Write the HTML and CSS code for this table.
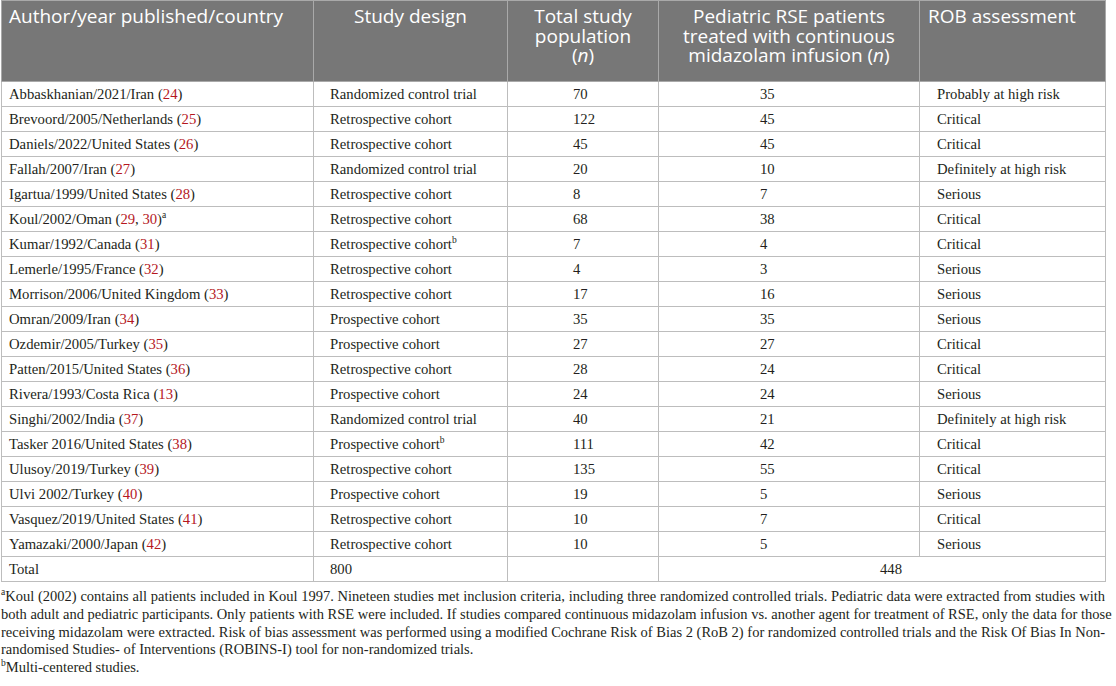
FILE: index.html
```html
<!DOCTYPE html>
<html>
<head>
<meta charset="utf-8">
<link rel="stylesheet" href="styles.css">
</head>
<body>
<div class="page">
<table class="tbl">
  <colgroup>
    <col class="c1"><col class="c2"><col class="c3"><col class="c4"><col class="c5">
  </colgroup>
  <thead>
    <tr>
      <th class="h-left">Author/year published/country</th>
      <th>Study design</th>
      <th><span class="hl">Total study</span><span class="hl">population</span><span class="hl">(<i>n</i>)</span></th>
      <th><span class="hl">Pediatric RSE patients</span><span class="hl">treated with continuous</span><span class="hl">midazolam infusion (<i>n</i>)</span></th>
      <th class="h-left h-rob">ROB assessment</th>
    </tr>
  </thead>
  <tbody>
    <tr><td class="a">Abbaskhanian/2021/Iran (<span class="ref">24</span>)</td><td class="d">Randomized control trial</td><td class="n1">70</td><td class="n2">35</td><td class="r">Probably at high risk</td></tr>
    <tr><td class="a">Brevoord/2005/Netherlands (<span class="ref">25</span>)</td><td class="d">Retrospective cohort</td><td class="n1">122</td><td class="n2">45</td><td class="r">Critical</td></tr>
    <tr><td class="a">Daniels/2022/United States (<span class="ref">26</span>)</td><td class="d">Retrospective cohort</td><td class="n1">45</td><td class="n2">45</td><td class="r">Critical</td></tr>
    <tr><td class="a">Fallah/2007/Iran (<span class="ref">27</span>)</td><td class="d">Randomized control trial</td><td class="n1">20</td><td class="n2">10</td><td class="r">Definitely at high risk</td></tr>
    <tr><td class="a">Igartua/1999/United States (<span class="ref">28</span>)</td><td class="d">Retrospective cohort</td><td class="n1">8</td><td class="n2">7</td><td class="r">Serious</td></tr>
    <tr><td class="a">Koul/2002/Oman (<span class="ref">29</span>, <span class="ref">30</span>)<sup>a</sup></td><td class="d">Retrospective cohort</td><td class="n1">68</td><td class="n2">38</td><td class="r">Critical</td></tr>
    <tr><td class="a">Kumar/1992/Canada (<span class="ref">31</span>)</td><td class="d">Retrospective cohort<sup>b</sup></td><td class="n1">7</td><td class="n2">4</td><td class="r">Critical</td></tr>
    <tr><td class="a">Lemerle/1995/France (<span class="ref">32</span>)</td><td class="d">Retrospective cohort</td><td class="n1">4</td><td class="n2">3</td><td class="r">Serious</td></tr>
    <tr><td class="a">Morrison/2006/United Kingdom (<span class="ref">33</span>)</td><td class="d">Retrospective cohort</td><td class="n1">17</td><td class="n2">16</td><td class="r">Serious</td></tr>
    <tr><td class="a">Omran/2009/Iran (<span class="ref">34</span>)</td><td class="d">Prospective cohort</td><td class="n1">35</td><td class="n2">35</td><td class="r">Serious</td></tr>
    <tr><td class="a">Ozdemir/2005/Turkey (<span class="ref">35</span>)</td><td class="d">Prospective cohort</td><td class="n1">27</td><td class="n2">27</td><td class="r">Critical</td></tr>
    <tr><td class="a">Patten/2015/United States (<span class="ref">36</span>)</td><td class="d">Retrospective cohort</td><td class="n1">28</td><td class="n2">24</td><td class="r">Critical</td></tr>
    <tr><td class="a">Rivera/1993/Costa Rica (<span class="ref">13</span>)</td><td class="d">Prospective cohort</td><td class="n1">24</td><td class="n2">24</td><td class="r">Serious</td></tr>
    <tr><td class="a">Singhi/2002/India (<span class="ref">37</span>)</td><td class="d">Randomized control trial</td><td class="n1">40</td><td class="n2">21</td><td class="r">Definitely at high risk</td></tr>
    <tr><td class="a">Tasker 2016/United States (<span class="ref">38</span>)</td><td class="d">Prospective cohort<sup>b</sup></td><td class="n1">111</td><td class="n2">42</td><td class="r">Critical</td></tr>
    <tr><td class="a">Ulusoy/2019/Turkey (<span class="ref">39</span>)</td><td class="d">Retrospective cohort</td><td class="n1">135</td><td class="n2">55</td><td class="r">Critical</td></tr>
    <tr><td class="a">Ulvi 2002/Turkey (<span class="ref">40</span>)</td><td class="d">Prospective cohort</td><td class="n1">19</td><td class="n2">5</td><td class="r">Serious</td></tr>
    <tr><td class="a">Vasquez/2019/United States (<span class="ref">41</span>)</td><td class="d">Retrospective cohort</td><td class="n1">10</td><td class="n2">7</td><td class="r">Critical</td></tr>
    <tr><td class="a">Yamazaki/2000/Japan (<span class="ref">42</span>)</td><td class="d">Retrospective cohort</td><td class="n1">10</td><td class="n2">5</td><td class="r">Serious</td></tr>
    <tr><td class="a">Total</td><td class="d">800</td><td class="n1"></td><td class="tot" colspan="2">448</td></tr>
  </tbody>
</table>
<div class="notes">
  <span class="jl"><sup>a</sup>Koul (2002) contains all patients included in Koul 1997. Nineteen studies met inclusion criteria, including three randomized controlled trials. Pediatric data were extracted from studies with</span>
  <span class="jl">both adult and pediatric participants. Only patients with RSE were included. If studies compared continuous midazolam infusion vs. another agent for treatment of RSE, only the data for those</span>
  <span class="jl">receiving midazolam were extracted. Risk of bias assessment was performed using a modified Cochrane Risk of Bias 2 (RoB 2) for randomized controlled trials and the Risk Of Bias In Non-</span>
  <span class="ll">randomised Studies- of Interventions (ROBINS-I) tool for non-randomized trials.</span>
  <span class="ll"><sup>b</sup>Multi-centered studies.</span>
</div>
</div>
</body>
</html>
```

FILE: styles.css
```css
html, body {
  margin: 0;
  padding: 0;
  background: #ffffff;
}

.page {
  padding-left: 1px;
  width: 1104px;
  font-family: "Liberation Serif", "Times New Roman", serif;
  color: #231f20;
}

.tbl {
  border-collapse: collapse;
  table-layout: fixed;
  width: 1104px;
  font-size: 14.7px;
}

.c1 { width: 312px; }
.c2 { width: 194px; }
.c3 { width: 151px; }
.c4 { width: 261px; }
.c5 { width: 186px; }

.tbl th {
  background: #777777;
  color: #ffffff;
  font-family: "Open Sans", "Noto Sans", sans-serif;
  font-weight: normal;
  font-size: 19px;
  line-height: 20px;
  height: 81px;
  box-sizing: border-box;
  vertical-align: top;
  text-align: center;
  padding: 5px 4px 0;
  border: 1px solid #a9a9a9;
  white-space: nowrap;
}

.tbl th .hl {
  display: block;
  height: 19.5px;
  line-height: 20px;
}

.tbl th.h-left {
  text-align: left;
  padding-left: 7px;
}

.tbl th.h-rob {
  padding-left: 8px;
}

.tbl td {
  height: 25px;
  box-sizing: border-box;
  padding: 0;
  border: 1px solid #bdbdbd;
  line-height: 18px;
  vertical-align: middle;
  white-space: nowrap;
}

.tbl td.a { padding-left: 7px; }
.tbl td.d { padding-left: 16px; }
.tbl td.n1 { padding-left: 65px; }
.tbl td.n2 { padding-left: 101px; }
.tbl td.r { padding-left: 17px; }
.tbl td.tot { text-align: center; padding-left: 18px; }

.ref { color: #b5171e; }

sup {
  font-size: 9.5px;
  line-height: 0;
  vertical-align: 6px;
}

.notes {
  margin-top: 6px;
  font-size: 14.5px;
  line-height: 17.8px;
}

.notes .jl {
  display: block;
  text-align: justify;
  text-align-last: justify;
  white-space: nowrap;
}

.notes .ll {
  display: block;
}
```
